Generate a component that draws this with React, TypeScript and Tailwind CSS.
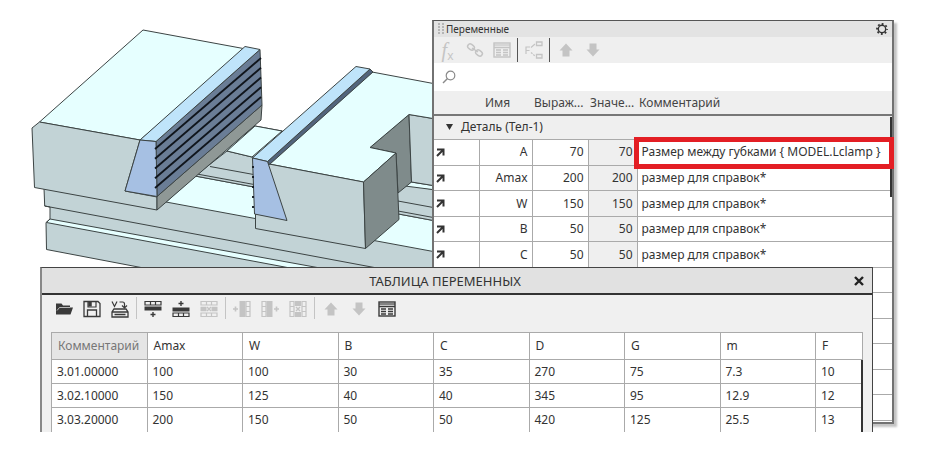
import type { ReactNode } from "react";

const variables = [
  { name: "A", expr: "70", value: "70", note: "Размер между губками { MODEL.Lclamp }" },
  { name: "Amax", expr: "200", value: "200", note: "размер для справок*" },
  { name: "W", expr: "150", value: "150", note: "размер для справок*" },
  { name: "B", expr: "50", value: "50", note: "размер для справок*" },
  { name: "C", expr: "50", value: "50", note: "размер для справок*" },
];

const columns = ["Комментарий", "Amax", "W", "B", "C", "D", "G", "m", "F"];
const rows = [
  ["3.01.00000", "100", "100", "30", "35", "270", "75", "7.3", "10"],
  ["3.02.10000", "150", "125", "40", "40", "345", "95", "12.9", "12"],
  ["3.03.20000", "200", "150", "50", "50", "420", "125", "25.5", "13"],
];

function Model() {
  const ribs = [0, 1, 2, 3, 4];
  return (
    <svg className="block h-[268px] w-[434px]" viewBox="0 0 434 268" role="img" aria-label="Тиски">
      <g stroke="#3c4444" strokeWidth="1" strokeLinejoin="round">
        {/* base */}
        <path d="M44 188L44.7 206L50 207V219L46 222.500L46.500 249.500L141 267.500H436V190L282 131L255 126L157 200Z" fill="#c2d3d6" />
        <path d="M166 202L195 176L436 221V252Z" fill="#e6ffff" />
        <path d="M195 176L227 151L252 157L436 190V221Z" fill="#c2d3d6" />
        <path d="M227 151L255 126L282 131L252 157Z" fill="#e6ffff" />
        <path d="M197 174L436 218M210 166.500L436 208" fill="none" />
        <path d="M50 219L320 268H290L46.500 222.500Z" fill="#e6ffff" />
        <path d="M44.700 206L377 268" fill="none" />
        <path d="M411 182L436 186V190L405 186Z" fill="#e6ffff" />
        {/* fixed jaw block */}
        <path d="M39.500 122L143 30L246 49L140 140Z" fill="#e6ffff" />
        <path d="M32 128L39.500 122L140 140L125 191L157 197V210L34.500 187.500Z" fill="#c2d3d6" />
        <path d="M157 196.500L262 105L261 120L157 210Z" fill="#8f9896" />
        <path d="M156 141.500L260 49.500L262 105L157 196.500Z" fill="#6a7d96" />
        <path d="M140 140L245 46.500L260 49.500L156 141.500Z" fill="#bfe4fa" />
        <path d="M140 140L156 141.500L157 196.500L125 191Z" fill="#a6c0e3" />
        {/* moving jaw block */}
        <path d="M370 147.500L409 114.500L411.500 182L398 193L396 153Z" fill="#7f8b8b" />
        <path d="M409 114.500L436 119V186L411.500 182Z" fill="#c2d3d6" />
        <path d="M269 164L372 72L436 84V119L409 114.500L370 147.500L396 153L363.500 182Z" fill="#e6ffff" />
        <path d="M255.500 158L269 164L363.500 182L365.500 248.500L255.500 228.500Z" fill="#c2d3d6" />
        <path d="M363.500 182L396 153L399 219.500L365.500 248.500Z" fill="#7f8b8b" />
        <path d="M267.500 161.500L370 69L373 72L269.500 164.500Z" fill="#52647c" />
        <path d="M252.500 158L356 66.500L370 69L267.500 161.500Z" fill="#bfe4fa" />
        <path d="M252.500 158L267.500 161.500L287 220.500L254.500 214Z" fill="#a6c0e3" />
      </g>
      <g stroke="#10151c" strokeWidth="1.800">
        {ribs.map((i) => (
          <line key={i} x1="155" x2="261" y1={149 + i * 9.75} y2={58 + i * 9.75} />
        ))}
        <path d="M253 166V208" strokeDasharray="2 8" />
      </g>
    </svg>
  );
}

function Icon({ children, size = 18 }: { children: ReactNode; size?: number }) {
  return (
    <svg width={size} height={size} viewBox={`0 0 ${size} ${size}`} fill="none" stroke="currentColor" aria-hidden="true">
      {children}
    </svg>
  );
}

function ArrowUp() {
  return (
    <Icon>
      <path d="M9 2.500L15.500 9.500H12.500V15.500H5.500V9.500H2.500Z" fill="currentColor" stroke="none" />
    </Icon>
  );
}

function ArrowDown() {
  return (
    <Icon>
      <path d="M9 15.500L15.500 8.500H12.500V2.500H5.500V8.500H2.500Z" fill="currentColor" stroke="none" />
    </Icon>
  );
}

function TableIcon() {
  return (
    <Icon>
      <rect x="1" y="2" width="16" height="14" strokeWidth="1.400" />
      <path d="M1 4H17" strokeWidth="2" opacity=".6" />
      <path d="M1 6.500H17M3 9H8M3 11.500H8M3 14H8M10 9H15M10 11.500H15M10 14H15" strokeWidth="1.300" />
    </Icon>
  );
}

function RowsIcon({ where }: { where: "below" | "above" | "delete" }) {
  if (where === "below")
    return (
      <Icon>
        <path d="M1 1.500H17V5H1ZM6.500 1.500V5M11.500 1.500V5" strokeWidth="1.200" />
        <path d="M0.500 8.500H17.500" strokeWidth="4" />
        <path d="M9 12V17M6.500 14.500H11.500" strokeWidth="1.400" />
      </Icon>
    );
  if (where === "above")
    return (
      <Icon>
        <path d="M9 1V6M6.500 3.500H11.500" strokeWidth="1.400" />
        <path d="M0.500 9.500H17.500" strokeWidth="4" />
        <path d="M1 13H17V16.500H1ZM6.500 13V16.500M11.500 13V16.500" strokeWidth="1.200" />
      </Icon>
    );
  return (
    <Icon>
      <path d="M1 1.500H17V5H1ZM6.500 1.500V5M11.500 1.500V5M1 13H17V16.500H1ZM6.500 13V16.500M11.500 13V16.500" strokeWidth="1.200" />
      <path d="M0.500 9H6.500M11.500 9H17.500" strokeWidth="4.500" />
      <path d="M7 7L11 11M11 7L7 11" strokeWidth="1.400" />
    </Icon>
  );
}

function ColsIcon({ where }: { where: "left" | "right" | "delete" }) {
  if (where === "delete")
    return (
      <Icon>
        <path d="M1 1.500H5V16.500H1ZM1 6.500H5M1 11.500H5M13 1.500H17V16.500H13ZM13 6.500H17M13 11.500H17" strokeWidth="1.200" />
        <path d="M9 1V6M9 12V17" strokeWidth="6" />
        <path d="M7 7L11 11M11 7L7 11" strokeWidth="1.400" />
      </Icon>
    );
  return (
    <Icon>
      <g transform={where === "right" ? "matrix(-1 0 0 1 18 0)" : undefined}>
        <path d="M13 1.500H17V16.500H13ZM13 6.500H17M13 11.500H17" strokeWidth="1.200" />
        <path d="M9.500 1V17" strokeWidth="6" />
        <path d="M0 9H5M2.500 6.500V11.500" strokeWidth="1.600" />
      </g>
    </Icon>
  );
}

function Tool({ label, off, wide, children }: { label: string; off?: boolean; wide?: boolean; children: ReactNode }) {
  return (
    <button
      type="button"
      aria-label={label}
      disabled={off}
      className={`flex h-6 shrink-0 items-center justify-center ${wide ? "w-7" : "w-[27px]"} ${off ? "text-[#c4c4c4]" : "text-[#3a3a3a]"}`}
    >
      {children}
    </button>
  );
}

function VariableColumns() {
  return (
    <colgroup>
      <col className="w-[45px]" />
      <col className="w-[53px]" />
      <col className="w-14" />
      <col className="w-[49px]" />
      <col />
    </colgroup>
  );
}

function VariablesPanel() {
  return (
    <section className="absolute top-5 right-[38px] left-[432px] border-2 border-t border-[#727272] border-t-[#555] bg-white pb-px shadow-[3px_3px_2px_#c4c4c4]">
      <header className="flex h-4 items-center bg-[#e3e3e3] pr-1 pl-1">
        <svg width="6" height="12" viewBox="0 0 6 12" fill="#b5b5b5" aria-hidden="true">
          <path d="M0 0h2v2H0zM4 0h2v2H4zM0 3h2v2H0zM4 3h2v2H4zM0 6h2v2H0zM4 6h2v2H4zM0 9h2v2H0zM4 9h2v2H4z" />
        </svg>
        <h2 className="ml-0.5 flex-1 text-[10px] leading-4">Переменные</h2>
        <button type="button" aria-label="Настройки" className="text-[#333]">
          <Icon size={12}>
            <circle cx="6" cy="6" r="3.700" strokeWidth="1.400" />
            <circle cx="6" cy="6" r="5" strokeWidth="1.800" strokeDasharray="1.800 2.127" strokeDashoffset=".9" />
          </Icon>
        </button>
      </header>
      <div className="flex h-[26px] items-center bg-[#efefef]">
        <Tool label="Функция" off>
          <span className="font-['Liberation_Serif',serif] text-xl leading-5 italic">
            f<sub className="font-['Open_Sans',sans-serif] text-xs leading-none not-italic">x</sub>
          </span>
        </Tool>
        <Tool label="Связь" off>
          <Icon>
            <rect x="1.500" y="3.500" width="7" height="5" rx="2.500" transform="rotate(35 5 6)" strokeWidth="1.500" />
            <rect x="9.500" y="9.500" width="7" height="5" rx="2.500" transform="rotate(35 13 12)" strokeWidth="1.500" />
            <path d="M6 7L12 11" strokeWidth="1.500" />
          </Icon>
        </Tool>
        <Tool label="Таблица" off><TableIcon /></Tool>
        <span className="mx-0.5 h-6 w-px bg-[#555]" />
        <Tool label="Зависимости" off>
          <Icon>
            <path d="M1 13V6H5M1 9.500H4.500M6 6.500L10 3" strokeWidth="1.200" />
            <path d="M6 11.500L10 15" strokeWidth="1.200" strokeDasharray="2 1" />
            <path d="M11.500 1H17V4.500H11.500ZM11.500 13.500H17V17H11.500Z" strokeWidth="1.300" />
          </Icon>
        </Tool>
        <span className="mx-0.5 h-6 w-px bg-[#555]" />
        <Tool label="Вверх" off><ArrowUp /></Tool>
        <Tool label="Вниз" off><ArrowDown /></Tool>
      </div>
      <label className="flex h-7 items-center pl-2 text-[#8a8a8a]">
        <Icon size={14}>
          <circle cx="8.500" cy="5.500" r="4.300" strokeWidth="1.200" />
          <path d="M5.500 8.500L1 13" strokeWidth="1.500" />
        </Icon>
        <input type="text" aria-label="Поиск" className="ml-2 min-w-0 flex-1 outline-none" />
      </label>
      <div className="relative">
        <table className="w-full table-fixed border-collapse text-xs leading-4">
          <VariableColumns />
          <thead>
            <tr className="h-6 border-b-2 border-[#777] bg-[#efefef] text-left text-[#444]">
              <th aria-label="Тип" className="p-0" />
              <th className="p-0 pl-1.5 font-normal">Имя</th>
              <th className="p-0 pl-0.5 font-normal">Выраж...</th>
              <th className="p-0 pl-0.5 font-normal">Значе...</th>
              <th className="p-0 pl-0.5 font-normal">Комментарий</th>
            </tr>
          </thead>
          <tbody>
            <tr className="h-6 border-b border-[#aaa] bg-[#efefef]">
              <td colSpan={5} className="p-0 pl-3">
                <button type="button" className="flex items-center gap-2">
                  <svg width="7" height="6" viewBox="0 0 7 6" fill="#333" aria-hidden="true"><path d="M0 0H7L3.500 6Z" /></svg>
                  Деталь (Тел-1)
                </button>
              </td>
            </tr>
          </tbody>
        </table>
        <table className="w-full table-fixed border-collapse text-xs leading-4">
          <VariableColumns />
          <tbody>
            {variables.map((v) => (
              <tr key={v.name} className="h-[25px] border-b border-[#aaa] text-right odd:h-[26px]">
                <td className="border-r border-[#aaa] p-0 pl-0.5">
                  <svg width="9" height="9" viewBox="0 0 9 9" fill="none" stroke="#333" strokeWidth="2" aria-hidden="true">
                    <path d="M1 1.500H7.500V7.500M7 2L1 8" />
                  </svg>
                </td>
                <td className="border-r border-[#aaa] p-0 pr-1">{v.name}</td>
                <td className="border-r border-[#aaa] p-0 pr-1">{v.expr}</td>
                <td className="border-r border-[#aaa] bg-[#efefef] p-0 pr-1">{v.value}</td>
                <td className="p-0 pl-1 text-left whitespace-nowrap">{v.note}</td>
              </tr>
            ))}
            {[5, 6, 7, 8, 9, 10].map((n) => (
              <tr key={n} className="h-[25px] border-b border-[#aaa] odd:h-[26px]"><td colSpan={5} className="p-0" /></tr>
            ))}
          </tbody>
        </table>
        <span className="absolute top-[26px] right-0 h-20 w-0.5 bg-[#333]" />
        <span className="absolute top-[46px] -right-0.5 left-[200px] h-8 border-[5px] border-[#e31e24]" />
      </div>
    </section>
  );
}

function TableDialog() {
  return (
    <section className="absolute top-[267px] right-[59px] left-10 border border-b-0 border-l-2 border-[#444] border-l-[#888] bg-[#f0f0f0]">
      <header className="relative flex h-[27px] items-center justify-center border-b-2 border-[#333] bg-[#e1e1e1]">
        <h1 className="pr-6 text-[13px] leading-5 text-[#333]">ТАБЛИЦА ПЕРЕМЕННЫХ</h1>
        <button type="button" aria-label="Закрыть" className="absolute right-2">
          <svg className="block" width="10" height="10" viewBox="0 0 10 10" stroke="#222" strokeWidth="2.400" aria-hidden="true"><path d="M1 1L9 9M9 1L1 9" /></svg>
        </button>
      </header>
      <div className="flex h-[37px] items-start pt-0.5 pl-2">
        <Tool wide label="Открыть">
          <Icon>
            <path d="M1 14.500V3.500H6.500L8 5.500H15V7.500H18L15.500 14.500Z" fill="currentColor" stroke="none" />
            <path d="M2 10.500L4.500 7.500H15" stroke="#f0f0f0" strokeWidth=".7" />
          </Icon>
        </Tool>
        <Tool wide label="Сохранить">
          <Icon>
            <path d="M1 1.500H15L17 3.500V16.500H1Z" strokeWidth="1.300" />
            <path d="M4.500 16.500V10H13.500V16.500" strokeWidth="1.300" />
            <path d="M5 1.500V7H13V1.500" strokeWidth="1.200" />
            <path d="M7 2V6.500" strokeWidth="3.500" />
          </Icon>
        </Tool>
        <Tool wide label="Преобразовать">
          <Icon>
            <path d="M1 1.500L3.500 6.500L6 1.500M8.500 2H11.500Q13.500 2 13.500 4V7M11 5.500L13.500 8L16 5.500" strokeWidth="1.200" />
            <path d="M3 9H15L17 12V17H1V12ZM1 12H17M3.500 14.500H14.500" strokeWidth="1.300" />
          </Icon>
        </Tool>
        <span className="mx-0.5 h-[22px] w-px bg-[#c4c4c4]" />
        <Tool wide label="Строка ниже"><RowsIcon where="below" /></Tool>
        <Tool wide label="Строка выше"><RowsIcon where="above" /></Tool>
        <Tool wide off label="Удалить строку"><RowsIcon where="delete" /></Tool>
        <span className="mx-0.5 h-[22px] w-px bg-[#c4c4c4]" />
        <Tool wide off label="Столбец слева"><ColsIcon where="left" /></Tool>
        <Tool wide off label="Столбец справа"><ColsIcon where="right" /></Tool>
        <Tool wide off label="Удалить столбец"><ColsIcon where="delete" /></Tool>
        <span className="mx-0.5 h-[22px] w-px bg-[#c4c4c4]" />
        <Tool wide off label="Вверх"><ArrowUp /></Tool>
        <Tool wide off label="Вниз"><ArrowDown /></Tool>
        <Tool wide label="Таблица"><TableIcon /></Tool>
      </div>
      <div className="relative mr-[9px] ml-[9px]">
        <table className="w-full table-fixed border-collapse bg-white text-left text-xs leading-4 text-[#333]">
          <colgroup>
            {columns.map((c) => (
              <col key={c} className={c === "F" ? "w-[47px]" : ""} />
            ))}
          </colgroup>
          <thead>
            <tr className="h-[27px]">
              {columns.map((c, i) => (
                <th key={c} className={`border border-[#aaa] p-0 pl-1.5 font-normal ${i === 0 ? "bg-[#e5e5e5] text-[#777]" : ""}`}>{c}</th>
              ))}
            </tr>
          </thead>
          <tbody>
            {rows.map((r) => (
              <tr key={r[0]} className="h-6">
                {r.map((cell, i) => (
                  <td key={columns[i]} className="border border-[#aaa] p-0 pl-[5px] [tr:last-child>&]:border-b-0">{cell}</td>
                ))}
              </tr>
            ))}
          </tbody>
        </table>
        <span className="absolute top-7 right-0 bottom-0 w-0.5 bg-[#333]" />
      </div>
    </section>
  );
}

export default function App() {
  return (
    <main className="relative min-h-screen w-full overflow-hidden bg-white font-['Noto_Sans','Open_Sans',sans-serif] text-[#333]">
      <Model />
      <VariablesPanel />
      <TableDialog />
    </main>
  );
}
